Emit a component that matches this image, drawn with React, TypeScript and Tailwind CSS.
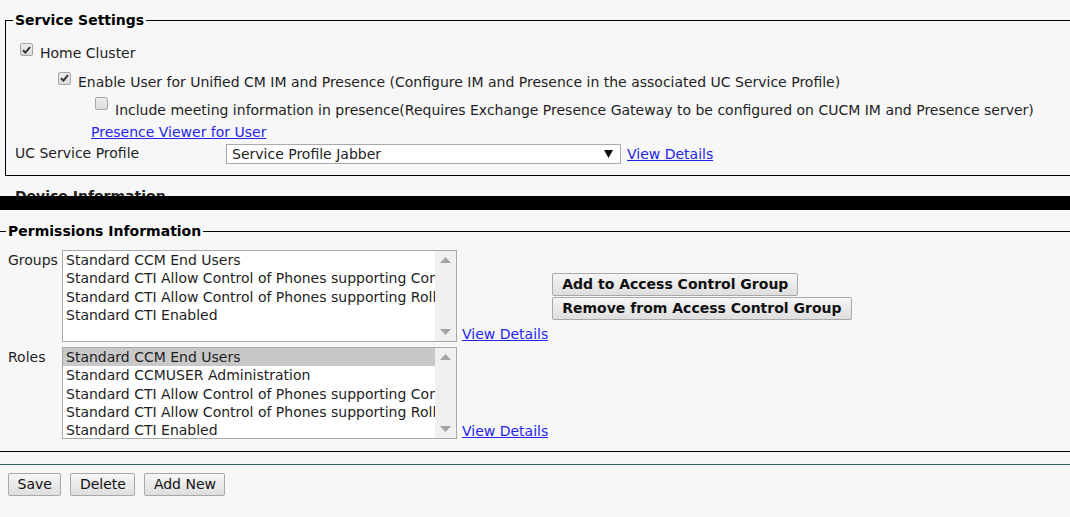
import React from "react";

const font = "font-['DejaVu_Sans',Verdana,sans-serif]";

const Check = ({ checked }: { checked?: boolean }) => (
  <span className="inline-flex h-[13px] w-[13px] shrink-0 items-center justify-center rounded-[2px] border border-[#a6a6a6] bg-gradient-to-b from-[#ececec] to-[#dcdcdc]">
    {checked && (
      <svg width="9" height="8" viewBox="0 0 9 8">
        <path d="M1 4.2 L3.4 6.6 L8 1.2" fill="none" stroke="#333" strokeWidth="2" />
      </svg>
    )}
  </span>
);

const Arrow = ({ down }: { down?: boolean }) => (
  <svg width="11" height="6" viewBox="0 0 11 6">
    <path d={down ? "M0 0 L11 0 L5.5 6 Z" : "M0 6 L11 6 L5.5 0 Z"} fill="#a3a3a3" />
  </svg>
);

const ListBox = ({ items, selected }: { items: string[]; selected?: number }) => (
  <div className="flex h-[92px] w-[395px] border border-[#a9a9a9] bg-white">
    <div className="flex-1 overflow-hidden">
      {items.map((item, i) => (
        <div
          key={item}
          className={`whitespace-nowrap pl-[3px] leading-[18.3px] ${
            i === selected ? "bg-[#c8c8c8]" : ""
          }`}
        >
          {item}
        </div>
      ))}
    </div>
    <div className="flex w-[21px] flex-col items-center justify-between bg-[#f0f0f0] py-[6px]">
      <Arrow />
      <Arrow down />
    </div>
  </div>
);

const Btn = ({ children, bold }: { children: React.ReactNode; bold?: boolean }) => (
  <button
    className={`h-[23px] rounded-[2px] border border-[#a8a8a8] bg-gradient-to-b from-[#f6f6f6] to-[#dedede] leading-[21px] text-[#111] ${
      bold ? "px-[9px] font-bold" : "px-[8.5px]"
    }`}
  >
    {children}
  </button>
);

const link = "text-[#2424ec] underline";

export default function App() {
  const groups = [
    "Standard CCM End Users",
    "Standard CTI Allow Control of Phones supporting Connected Xfer and conf",
    "Standard CTI Allow Control of Phones supporting Rollover Mode",
    "Standard CTI Enabled",
  ];
  const roles = [
    "Standard CCM End Users",
    "Standard CCMUSER Administration",
    "Standard CTI Allow Control of Phones supporting Connected Xfer and conf",
    "Standard CTI Allow Control of Phones supporting Rollover Mode",
    "Standard CTI Enabled",
  ];

  return (
    <div className={`h-[517px] w-[1070px] overflow-hidden bg-[#f7f7f7] pt-[12px] text-[14px] leading-[17px] text-[#1e1e1e] ${font}`}>
      <fieldset className="ml-[5px] w-[1090px] border border-black pb-[11px] pl-[9px]">
        <legend className="-ml-[2px] px-[2px] font-bold leading-[16px] text-black">
          Service Settings
        </legend>
        <div className="mt-[11px] flex h-[29px] items-center gap-[7px] pl-[5px]">
          <span className="-mt-[9px]">
            <Check checked />
          </span>
          <span>Home Cluster</span>
        </div>
        <div className="flex h-[28px] items-center gap-[7px] pl-[43px]">
          <span className="-mt-[9px]">
            <Check checked />
          </span>
          <span>
            Enable User for Unified CM IM and Presence (Configure IM and Presence in the associated UC
            Service Profile)
          </span>
        </div>
        <div className="flex h-[28px] items-center gap-[7px] pl-[80px]">
          <span className="-mt-[9px]">
            <Check />
          </span>
          <span>
            Include meeting information in presence(Requires Exchange Presence Gateway to be configured on
            CUCM IM and Presence server)
          </span>
        </div>
        <div className="flex h-[17px] items-center pl-[76px]">
          <a className={link}>Presence Viewer for User</a>
        </div>
        <div className="mt-[3px] flex h-[20px] items-center">
          <span className="-mt-[1px] w-[211px]">UC Service Profile</span>
          <div className="flex h-[20px] w-[395px] items-center justify-between border border-[#aaa] bg-white pl-[5px] pr-[7px]">
            <span>Service Profile Jabber</span>
            <svg width="9" height="8" viewBox="0 0 9 8">
              <path d="M0 0 L9 0 L4.5 8 Z" fill="#111" />
            </svg>
          </div>
          <a className={`ml-[6px] ${link}`}>View Details</a>
        </div>
      </fieldset>

      <div className="h-[20px] overflow-hidden pl-[15px] pt-[12px] font-bold">Device Information</div>
      <div className="h-[14px] bg-black" />

      <fieldset className="mt-[13px] w-[1090px] border-x-0 border-y border-black pb-[12px] pl-[8px]">
        <legend className="-ml-[2px] px-[2px] font-bold leading-[16px] text-black">
          Permissions Information
        </legend>
        <div className="mt-[11px] flex">
          <span className="w-[54px] pt-[2px]">Groups</span>
          <ListBox items={groups} />
          <div className="flex items-end pl-[5px]">
            <a className={`-mb-[1px] ${link}`}>View Details</a>
          </div>
          <div className="flex flex-col justify-center gap-px pl-[4px]">
            <div>
              <Btn bold>Add to Access Control Group</Btn>
            </div>
            <div>
              <Btn bold>Remove from Access Control Group</Btn>
            </div>
          </div>
        </div>
        <div className="mt-[5px] flex">
          <span className="w-[54px] pt-[2px]">Roles</span>
          <ListBox items={roles} selected={0} />
          <div className="flex items-end pl-[5px]">
            <a className={`-mb-[1px] ${link}`}>View Details</a>
          </div>
        </div>
      </fieldset>

      <div className="mt-[12px] h-px bg-[#2e6565]" />
      <div className="mt-[8px] flex gap-[9px] pl-[8px]">
        <Btn>Save</Btn>
        <Btn>Delete</Btn>
        <Btn>Add New</Btn>
      </div>
    </div>
  );
}
